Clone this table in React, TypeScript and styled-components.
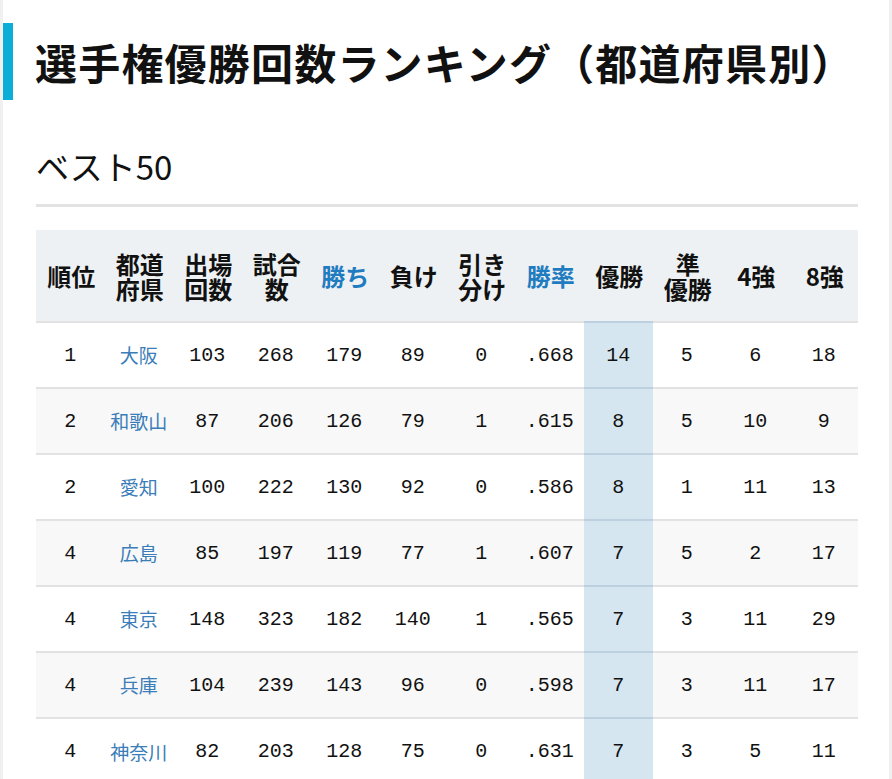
import React from "react";
import styled, { createGlobalStyle } from "styled-components";

const GlobalStyle = createGlobalStyle`
  html, body {
    margin: 0;
    padding: 0;
    background: #f0f0f0;
  }
  body {
    font-family: "Noto Sans CJK JP", "Noto Sans", sans-serif;
    color: #111;
  }
`;

const Page = styled.main`
  margin: 0 3px;
  background: #ffffff;
  min-height: 779px;
  padding: 23px 31px 0 0;
  box-sizing: border-box;
`;

const Title = styled.h1`
  margin: 0;
  border-left: 10px solid #0aaed6;
  padding-left: 22px;
  height: 77px;
  line-height: 77px;
  font-size: 42px;
  font-weight: 700;
  color: #111;
  white-space: nowrap;
  letter-spacing: 1.2px;
`;

const Content = styled.section`
  padding-left: 33px;
`;

const SubTitle = styled.h2`
  margin: 42px 0 0;
  font-size: 33px;
  font-weight: 400;
  line-height: 48px;
  padding: 0 0 14px 0;
  border-bottom: 3px solid #e3e3e3;
  color: #111;
`;

const Table = styled.table`
  margin-top: 23px;
  width: 822px;
  table-layout: fixed;
  border-collapse: collapse;
`;

const HeadRow = styled.tr`
  background: #eef1f3;
  height: 92px;
`;

const HeadCell = styled.th<{ $accent?: boolean }>`
  padding: 0 0 0 2px;
  font-size: 24px;
  font-weight: 700;
  line-height: 25px;
  text-align: center;
  vertical-align: middle;
  color: ${(p) => (p.$accent ? "#1f7cc0" : "#111")};
`;

const Row = styled.tr<{ $alt: boolean }>`
  background: ${(p) => (p.$alt ? "#f8f8f8" : "#ffffff")};
  height: 66px;
`;

const Cell = styled.td<{ $highlight?: boolean }>`
  padding: 0;
  text-align: center;
  vertical-align: middle;
  border-top: 2px solid ${(p) => (p.$highlight ? "#bdd0df" : "#e2e2e2")};
  background: ${(p) => (p.$highlight ? "#d6e6f0" : "transparent")};
  font-family: "Liberation Mono", "DejaVu Sans Mono", monospace;
  font-size: 20px;
  color: #111;
`;

const PrefLink = styled.a`
  font-family: "Noto Sans CJK JP", sans-serif;
  font-size: 19px;
  color: #3a7db8;
  text-decoration: none;
`;

type Rec = {
  rank: string;
  pref: string;
  apps: string;
  games: string;
  win: string;
  lose: string;
  draw: string;
  rate: string;
  champ: string;
  runner: string;
  best4: string;
  best8: string;
};

const rows: Rec[] = [
  { rank: "1", pref: "大阪", apps: "103", games: "268", win: "179", lose: "89", draw: "0", rate: ".668", champ: "14", runner: "5", best4: "6", best8: "18" },
  { rank: "2", pref: "和歌山", apps: "87", games: "206", win: "126", lose: "79", draw: "1", rate: ".615", champ: "8", runner: "5", best4: "10", best8: "9" },
  { rank: "2", pref: "愛知", apps: "100", games: "222", win: "130", lose: "92", draw: "0", rate: ".586", champ: "8", runner: "1", best4: "11", best8: "13" },
  { rank: "4", pref: "広島", apps: "85", games: "197", win: "119", lose: "77", draw: "1", rate: ".607", champ: "7", runner: "5", best4: "2", best8: "17" },
  { rank: "4", pref: "東京", apps: "148", games: "323", win: "182", lose: "140", draw: "1", rate: ".565", champ: "7", runner: "3", best4: "11", best8: "29" },
  { rank: "4", pref: "兵庫", apps: "104", games: "239", win: "143", lose: "96", draw: "0", rate: ".598", champ: "7", runner: "3", best4: "11", best8: "17" },
  { rank: "4", pref: "神奈川", apps: "82", games: "203", win: "128", lose: "75", draw: "0", rate: ".631", champ: "7", runner: "3", best4: "5", best8: "11" },
];

const headers: { label: React.ReactNode; accent?: boolean }[] = [
  { label: "順位" },
  { label: <>都道<br />府県</> },
  { label: <>出場<br />回数</> },
  { label: <>試合<br />数</> },
  { label: "勝ち", accent: true },
  { label: "負け" },
  { label: <>引き<br />分け</> },
  { label: "勝率", accent: true },
  { label: "優勝" },
  { label: <>準<br />優勝</> },
  { label: "4強" },
  { label: "8強" },
];

export default function App() {
  return (
    <>
      <GlobalStyle />
      <Page>
        <Title>選手権優勝回数ランキング（都道府県別）</Title>
        <Content>
          <SubTitle>ベスト50</SubTitle>
          <Table>
            <thead>
              <HeadRow>
                {headers.map((h, i) => (
                  <HeadCell key={i} $accent={h.accent}>
                    {h.label}
                  </HeadCell>
                ))}
              </HeadRow>
            </thead>
            <tbody>
              {rows.map((r, i) => (
                <Row key={i} $alt={i % 2 === 1}>
                  <Cell>{r.rank}</Cell>
                  <Cell>
                    <PrefLink href="#">{r.pref}</PrefLink>
                  </Cell>
                  <Cell>{r.apps}</Cell>
                  <Cell>{r.games}</Cell>
                  <Cell>{r.win}</Cell>
                  <Cell>{r.lose}</Cell>
                  <Cell>{r.draw}</Cell>
                  <Cell>{r.rate}</Cell>
                  <Cell $highlight>{r.champ}</Cell>
                  <Cell>{r.runner}</Cell>
                  <Cell>{r.best4}</Cell>
                  <Cell>{r.best8}</Cell>
                </Row>
              ))}
            </tbody>
          </Table>
        </Content>
      </Page>
    </>
  );
}
